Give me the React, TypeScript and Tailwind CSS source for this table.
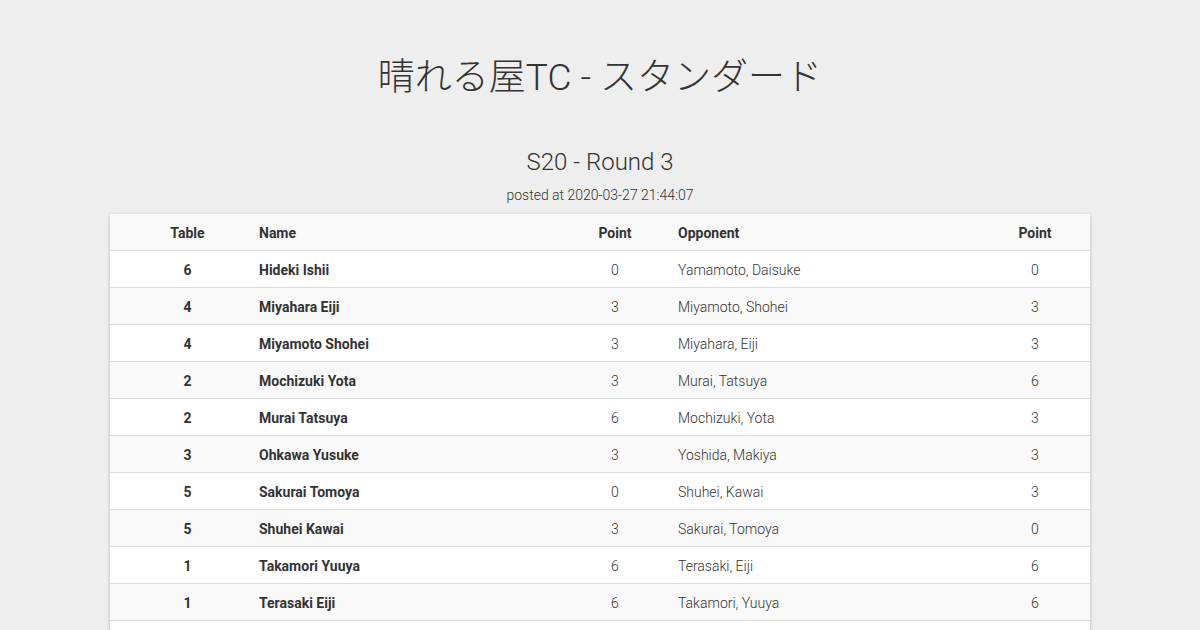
const rows = [
  { table: 6, name: "Hideki Ishii", point: 0, opp: "Yamamoto, Daisuke", oppPoint: 0 },
  { table: 4, name: "Miyahara Eiji", point: 3, opp: "Miyamoto, Shohei", oppPoint: 3 },
  { table: 4, name: "Miyamoto Shohei", point: 3, opp: "Miyahara, Eiji", oppPoint: 3 },
  { table: 2, name: "Mochizuki Yota", point: 3, opp: "Murai, Tatsuya", oppPoint: 6 },
  { table: 2, name: "Murai Tatsuya", point: 6, opp: "Mochizuki, Yota", oppPoint: 3 },
  { table: 3, name: "Ohkawa Yusuke", point: 3, opp: "Yoshida, Makiya", oppPoint: 3 },
  { table: 5, name: "Sakurai Tomoya", point: 0, opp: "Shuhei, Kawai", oppPoint: 3 },
  { table: 5, name: "Shuhei Kawai", point: 3, opp: "Sakurai, Tomoya", oppPoint: 0 },
  { table: 1, name: "Takamori Yuuya", point: 6, opp: "Terasaki, Eiji", oppPoint: 6 },
  { table: 1, name: "Terasaki Eiji", point: 6, opp: "Takamori, Yuuya", oppPoint: 6 },
];

const cols = "grid grid-cols-[149px_301px_110px_310px_110px] items-center h-[37px] pt-[2px]";

export default function App() {
  return (
    <div className="min-h-screen bg-[#eeeeee] text-[#333333] font-['Roboto','Noto_Sans_CJK_JP',sans-serif] overflow-hidden h-[630px]">
      <div className="flex flex-col items-center pt-[56px]">
        <h1 className="text-[37px] leading-[44px] font-light text-[#333]">
          晴れる屋TC - スタンダード
        </h1>
        <h2 className="mt-[47px] text-[24px] leading-[30px] font-light">S20 - Round 3</h2>
        <p className="mt-[8px] text-[14px] leading-[20px] font-light">posted at 2020-03-27 21:44:07</p>
      </div>
      <div className="mx-auto mt-[9px] w-[980px] bg-white shadow-[0_1px_4px_rgba(0,0,0,0.2)] text-[14px]">
        <div className={`${cols} bg-[#f9f9f9] border-b border-[#dddddd] font-bold`}>
          <div className="text-center pl-[6px]">Table</div>
          <div>Name</div>
          <div className="text-center">Point</div>
          <div className="pl-2">Opponent</div>
          <div className="text-center">Point</div>
        </div>
        {rows.map((r, i) => (
          <div
            key={i}
            className={`${cols} border-b border-[#dddddd] ${i % 2 === 1 ? "bg-[#f9f9f9]" : "bg-white"}`}
          >
            <div className="text-center pl-[6px] font-bold">{r.table}</div>
            <div className="font-bold">{r.name}</div>
            <div className="text-center font-light">{r.point}</div>
            <div className="pl-2 font-light">{r.opp}</div>
            <div className="text-center font-light">{r.oppPoint}</div>
          </div>
        ))}
        <div className="h-[37px] bg-white" />
      </div>
    </div>
  );
}
